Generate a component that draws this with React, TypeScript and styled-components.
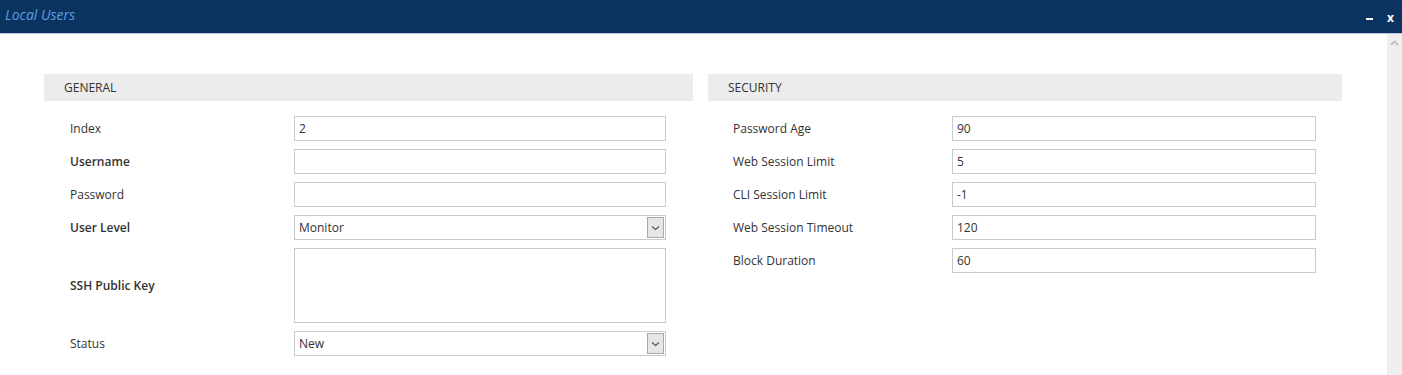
import React from 'react';
import styled, { createGlobalStyle } from 'styled-components';

const GlobalStyle = createGlobalStyle`
    html, body {
        margin: 0;
        padding: 0;
        background: #fff;
        font-family: "Open Sans", "Noto Sans", sans-serif;
    }
`;

const Styled = {
    Window: styled.div`
        width: 1402px;
        height: 375px;
        display: flex;
        flex-direction: column;
        overflow: hidden;
    `,
    TitleBar: styled.div`
        height: 33px;
        background-color: #0b3360;
        border-bottom: 1px solid #b9c7d8;
        display: flex;
        align-items: center;
        justify-content: space-between;
        padding: 0 8px 0 5px;
        flex-shrink: 0;
    `,
    Title: styled.div`
        color: #5f9fe0;
        font-style: italic;
        font-size: 14px;
        margin-top: -5px;
    `,
    Controls: styled.div`
        display: flex;
        align-items: center;
        gap: 14px;
        color: #fff;
        font-weight: bold;
        font-size: 12px;
        margin-top: 2px;
    `,
    Minimize: styled.span`
        width: 7px;
        height: 2px;
        background: #fff;
        margin-top: 2px;
    `,
    Main: styled.div`
        flex: 1;
        display: flex;
    `,
    Content: styled.div`
        flex: 1;
        padding: 40px 0 0 44px;
        display: grid;
        grid-template-columns: 649px 634px;
        column-gap: 15px;
        align-content: start;
    `,
    Scrollbar: styled.div`
        width: 15px;
        background-color: #efefef;
        display: flex;
        justify-content: center;
        padding-top: 6px;
    `,
    Section: styled.div`
        display: flex;
        flex-direction: column;
    `,
    SectionHeader: styled.div`
        height: 27px;
        background-color: #ececec;
        padding-left: 20px;
        display: flex;
        align-items: center;
        font-size: 12px;
        color: #333;
    `,
    Rows: styled.div`
        display: flex;
        flex-direction: column;
        gap: 8px;
        padding-top: 15px;
    `,
    Row: styled.div<{ $indent: number; $labelWidth: number }>`
        display: grid;
        grid-template-columns: ${p => p.$labelWidth}px 1fr;
        align-items: center;
        padding-left: ${p => p.$indent}px;
    `,
    Label: styled.div<{ $bold?: boolean }>`
        font-size: 12px;
        color: #333;
        font-weight: ${p => (p.$bold ? 600 : 400)};
    `,
    Field: styled.div<{ $width: number; $tall?: boolean }>`
        box-sizing: border-box;
        width: ${p => p.$width}px;
        height: ${p => (p.$tall ? 75 : 25)}px;
        border: 1px solid #c5cad3;
        background: #fff;
        display: flex;
        align-items: center;
        padding-left: 4px;
        font-size: 12px;
        color: #333;
        position: relative;
    `,
    SelectButton: styled.div`
        position: absolute;
        top: 1px;
        right: 1px;
        bottom: 1px;
        width: 15px;
        background: #e6e6e6;
        border: 1px solid #a9a9a9;
        display: flex;
        align-items: center;
        justify-content: center;
    `,
};

type RowDef = { label: string; value?: string; bold?: boolean; select?: boolean; tall?: boolean };

const general: RowDef[] = [
    { label: 'Index', value: '2' },
    { label: 'Username', bold: true },
    { label: 'Password' },
    { label: 'User Level', value: 'Monitor', bold: true, select: true },
    { label: 'SSH Public Key', bold: true, tall: true },
    { label: 'Status', value: 'New', select: true },
];

const security: RowDef[] = [
    { label: 'Password Age', value: '90' },
    { label: 'Web Session Limit', value: '5' },
    { label: 'CLI Session Limit', value: '-1' },
    { label: 'Web Session Timeout', value: '120' },
    { label: 'Block Duration', value: '60' },
];

const Chevron = () => (
    <svg width="9" height="6" viewBox="0 0 9 6">
        <path d="M1 1.5 L4.5 4.5 L8 1.5" fill="none" stroke="#555" strokeWidth="1.2" />
    </svg>
);

const Section: React.FC<{ title: string; rows: RowDef[]; indent: number; labelWidth: number; fieldWidth: number }> = ({
    title,
    rows,
    indent,
    labelWidth,
    fieldWidth,
}) => (
    <Styled.Section>
        <Styled.SectionHeader>{title}</Styled.SectionHeader>
        <Styled.Rows>
            {rows.map(r => (
                <Styled.Row key={r.label} $indent={indent} $labelWidth={labelWidth}>
                    <Styled.Label $bold={r.bold}>{r.label}</Styled.Label>
                    <Styled.Field $width={fieldWidth} $tall={r.tall}>
                        {r.value}
                        {r.select && (
                            <Styled.SelectButton>
                                <Chevron />
                            </Styled.SelectButton>
                        )}
                    </Styled.Field>
                </Styled.Row>
            ))}
        </Styled.Rows>
    </Styled.Section>
);

const App: React.FC = () => {
    return (
        <Styled.Window>
            <GlobalStyle />
            <Styled.TitleBar>
                <Styled.Title>Local Users</Styled.Title>
                <Styled.Controls>
                    <Styled.Minimize />
                    <span>x</span>
                </Styled.Controls>
            </Styled.TitleBar>
            <Styled.Main>
                <Styled.Content>
                    <Section title="GENERAL" rows={general} indent={26} labelWidth={224} fieldWidth={372} />
                    <Section title="SECURITY" rows={security} indent={25} labelWidth={219} fieldWidth={364} />
                </Styled.Content>
                <Styled.Scrollbar>
                    <svg width="9" height="6" viewBox="0 0 9 6">
                        <path d="M1 5 L4.5 1.5 L8 5" fill="none" stroke="#c2c2c2" strokeWidth="2" />
                    </svg>
                </Styled.Scrollbar>
            </Styled.Main>
        </Styled.Window>
    );
};

export default App;
